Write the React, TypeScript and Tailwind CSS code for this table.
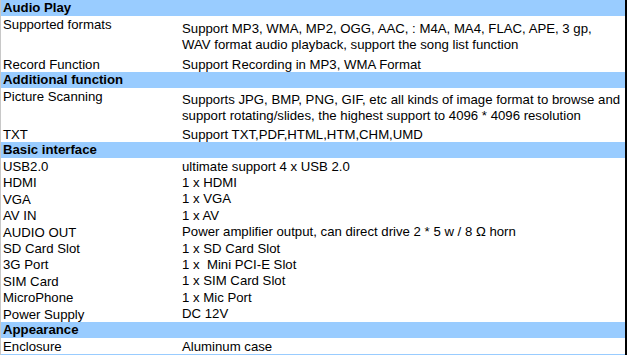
import React from "react";

type Row =
  | { kind: "section"; title: string; h: string }
  | { kind: "item"; label: string; value: string[]; h: string };

const rows: Row[] = [
  { kind: "section", title: "Audio Play", h: "h-[16px]" },
  {
    kind: "item",
    label: "Supported formats",
    value: [
      "Support MP3, WMA, MP2, OGG, AAC, : M4A, MA4, FLAC, APE, 3 gp,",
      "WAV format audio playback, support the song list function",
    ],
    h: "h-[40px]",
  },
  { kind: "item", label: "Record Function", value: ["Support Recording in MP3, WMA Format"], h: "h-[16px]" },
  { kind: "section", title: "Additional function", h: "h-[16px]" },
  {
    kind: "item",
    label: "Picture Scanning",
    value: [
      "Supports JPG, BMP, PNG, GIF, etc all kinds of image format to browse and",
      "support rotating/slides, the highest support to 4096 * 4096 resolution",
    ],
    h: "h-[38px]",
  },
  { kind: "item", label: "TXT", value: ["Support TXT,PDF,HTML,HTM,CHM,UMD"], h: "h-[16px]" },
  { kind: "section", title: "Basic interface", h: "h-[16px]" },
  { kind: "item", label: "USB2.0", value: ["ultimate support 4 x USB 2.0"], h: "h-[16.4px]" },
  { kind: "item", label: "HDMI", value: ["1 x HDMI"], h: "h-[16.4px]" },
  { kind: "item", label: "VGA", value: ["1 x VGA"], h: "h-[16.4px]" },
  { kind: "item", label: "AV IN", value: ["1 x AV"], h: "h-[16.4px]" },
  {
    kind: "item",
    label: "AUDIO OUT",
    value: ["Power amplifier output, can direct drive 2 * 5 w / 8 \u03A9 horn"],
    h: "h-[16.4px]",
  },
  { kind: "item", label: "SD Card Slot", value: ["1 x SD Card Slot"], h: "h-[16.4px]" },
  { kind: "item", label: "3G Port", value: ["1 x \u00A0Mini PCI-E Slot"], h: "h-[16.4px]" },
  { kind: "item", label: "SIM Card", value: ["1 x SIM Card Slot"], h: "h-[16.4px]" },
  { kind: "item", label: "MicroPhone", value: ["1 x Mic Port"], h: "h-[16.4px]" },
  { kind: "item", label: "Power Supply", value: ["DC 12V"], h: "h-[16.4px]" },
  { kind: "section", title: "Appearance", h: "h-[16.4px]" },
  { kind: "item", label: "Enclosure", value: ["Aluminum case"], h: "h-[16px]" },
];

export default function App() {
  return (
    <div className="w-[627px] h-[355px] overflow-hidden bg-white flex font-['Liberation_Sans',Arial,sans-serif] text-[13.2px] text-black leading-[16px]">
      <div className="w-[1px] bg-[#c8c8c8]" />
      <div className="w-[624px] flex flex-col">
        {rows.map((r, i) =>
          r.kind === "section" ? (
            <div
              key={i}
              className={`${r.h} shrink-0 bg-[#99ccff] pl-[2px] font-bold flex items-center`}
            >
              {r.title}
            </div>
          ) : (
            <div key={i} className={`${r.h} shrink-0 flex`}>
              <div className="w-[181px] pl-[2px] pt-[1px] shrink-0 flex items-start">{r.label}</div>
              <div className="flex-1 flex flex-col justify-center pt-[1px]">
                {r.value.map((v, j) => (
                  <div key={j} className="whitespace-pre">
                    {v}
                  </div>
                ))}
              </div>
            </div>
          )
        )}
        <div className="h-[1px] bg-[#99ccff] shrink-0" />
      </div>
      <div className="w-[2px] bg-black" />
    </div>
  );
}
